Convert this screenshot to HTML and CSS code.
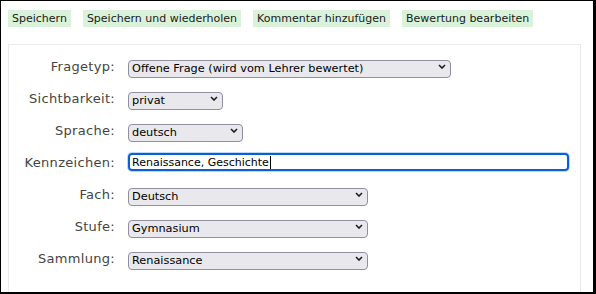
FILE: index.html
```html
<!DOCTYPE html>
<html lang="de">
<head>
  <meta charset="UTF-8" />
  <meta name="viewport" content="width=device-width, initial-scale=1.0"/>
  <title>Frage bearbeiten</title>
  <link rel="stylesheet" href="styles.css">
</head>
<body>
  <div class="frame">
    <div class="toolbar">
      <span class="action">Speichern</span>
      <span class="action">Speichern und wiederholen</span>
      <span class="action">Kommentar hinzufügen</span>
      <span class="action">Bewertung bearbeiten</span>
    </div>

    <div class="panel">
      <div class="row">
        <label class="caption">Fragetyp:</label>
        <span class="pick w-type">
          <select><option>Offene Frage (wird vom Lehrer bewertet)</option></select>
          <svg class="chev" width="8" height="5" viewBox="0 0 8 5"><path d="M1 1 L4 4 L7 1" fill="none" stroke="#1c1b22" stroke-width="1.6"/></svg>
        </span>
      </div>
      <div class="row">
        <label class="caption">Sichtbarkeit:</label>
        <span class="pick w-vis">
          <select><option>privat</option></select>
          <svg class="chev" width="8" height="5" viewBox="0 0 8 5"><path d="M1 1 L4 4 L7 1" fill="none" stroke="#1c1b22" stroke-width="1.6"/></svg>
        </span>
      </div>
      <div class="row">
        <label class="caption">Sprache:</label>
        <span class="pick w-lang">
          <select><option>deutsch</option></select>
          <svg class="chev" width="8" height="5" viewBox="0 0 8 5"><path d="M1 1 L4 4 L7 1" fill="none" stroke="#1c1b22" stroke-width="1.6"/></svg>
        </span>
      </div>
      <div class="row">
        <label class="caption">Kennzeichen:</label>
        <span class="field">Renaissance, Geschichte<span class="caret"></span></span>
      </div>
      <div class="row">
        <label class="caption">Fach:</label>
        <span class="pick w-std">
          <select><option>Deutsch</option></select>
          <svg class="chev" width="8" height="5" viewBox="0 0 8 5"><path d="M1 1 L4 4 L7 1" fill="none" stroke="#1c1b22" stroke-width="1.6"/></svg>
        </span>
      </div>
      <div class="row">
        <label class="caption">Stufe:</label>
        <span class="pick w-std">
          <select><option>Gymnasium</option></select>
          <svg class="chev" width="8" height="5" viewBox="0 0 8 5"><path d="M1 1 L4 4 L7 1" fill="none" stroke="#1c1b22" stroke-width="1.6"/></svg>
        </span>
      </div>
      <div class="row">
        <label class="caption">Sammlung:</label>
        <span class="pick w-std">
          <select><option>Renaissance</option></select>
          <svg class="chev" width="8" height="5" viewBox="0 0 8 5"><path d="M1 1 L4 4 L7 1" fill="none" stroke="#1c1b22" stroke-width="1.6"/></svg>
        </span>
      </div>
    </div>
  </div>
</body>
</html>
```

FILE: styles.css
```css
html, body {
  margin: 0;
  height: 100%;
  overflow: hidden;
  background: #fff;
}
.frame {
  box-sizing: border-box;
  height: 294px;
  border: solid #000;
  border-width: 1px 3px 2px 1px;
  padding: 9px 12px 0 7px;
  font-family: 'DejaVu Sans', sans-serif;
  overflow: hidden;
}
.toolbar {
  display: flex;
  gap: 12px;
  height: 17px;
}
.action {
  background: #d9f2d9;
  color: #1a1a1a;
  font-size: 11px;
  line-height: 17px;
  padding: 0 4px;
}
.panel {
  margin-top: 17px;
  border: 1px solid #ebebeb;
  border-bottom: none;
  height: 260px;
  padding-top: 12px;
  display: flex;
  flex-direction: column;
  gap: 14px;
}
.row {
  display: flex;
  align-items: center;
  height: 18px;
}
.caption {
  width: 106px;
  text-align: right;
  margin-right: 13px;
  color: #444;
  font-size: 13px;
  letter-spacing: 0.3px;
}
.pick {
  position: relative;
  display: block;
  height: 18px;
}
.pick select {
  appearance: none;
  -webkit-appearance: none;
  box-sizing: border-box;
  width: 100%;
  height: 18px;
  margin: 0;
  padding: 0 0 0 3px;
  border: 1px solid #8f8f9d;
  border-radius: 4px;
  background: #e9e9ed;
  color: #000;
  font-family: 'DejaVu Sans', sans-serif;
  font-size: 11.3px;
}
.chev {
  position: absolute;
  right: 5px;
  top: 7px;
}
.w-type { width: 323px; }
.w-vis { width: 95px; }
.w-lang { width: 115px; }
.w-std { width: 240px; }
.field {
  box-sizing: border-box;
  display: flex;
  align-items: center;
  width: 441px;
  height: 18px;
  padding-left: 2px;
  border: 2px solid #0b5ed7;
  border-radius: 4px;
  box-shadow: 0 0 0 1px #b9d8fb;
  font-size: 11px;
  color: #000;
}
.caret {
  display: inline-block;
  width: 1px;
  height: 13px;
  margin-left: 1px;
  background: #000;
}
```
